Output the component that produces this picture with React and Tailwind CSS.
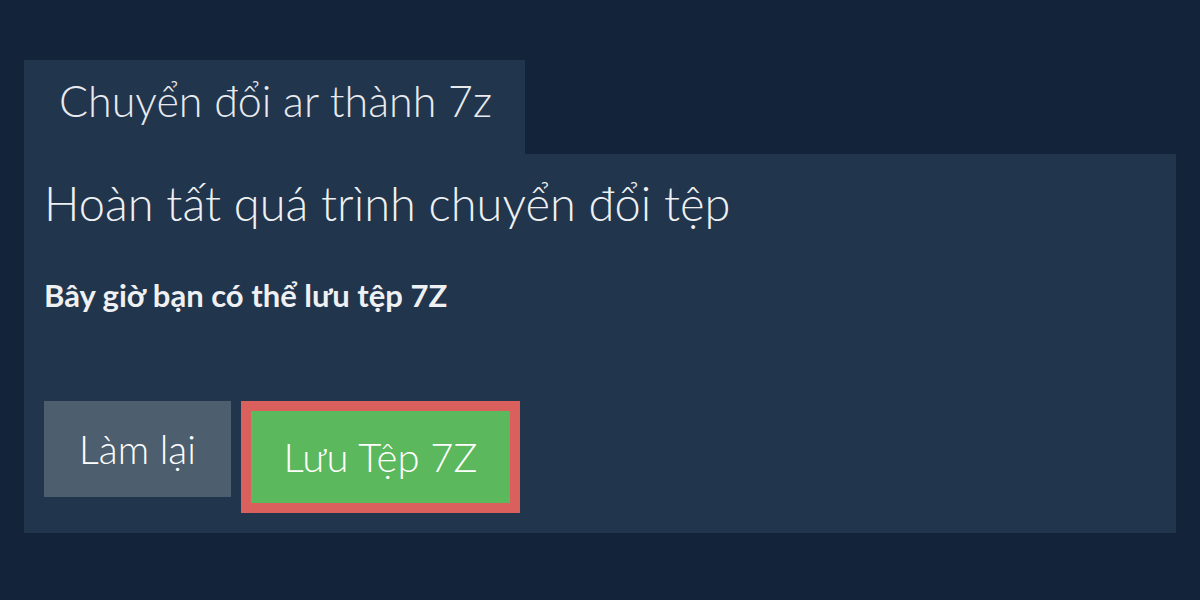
export default function App() {
  return (
    <div className="h-[600px] w-[1200px] bg-[#12233a] px-6 pt-[60px] font-['Lato','Liberation_Sans',sans-serif] text-white">
      <div className="h-[94px] w-[501px] bg-[#21354d] pl-[35px] pt-[19px]">
        <span className="block text-[43px] font-light leading-none text-[#e8eaed]">Chuyển đổi ar thành 7z</span>
      </div>
      <div className="h-[379px] bg-[#21354d] px-5 pt-[26px]">
        <h1 className="text-[47px] font-light leading-none text-[#eef0f2]">Hoàn tất quá trình chuyển đổi tệp</h1>
        <p className="mt-[53px] text-[31px] font-bold leading-none text-[#eef0f2]">Bây giờ bạn có thể lưu tệp 7Z</p>
        <div className="mt-[90px] flex items-start gap-[10px]">
          <button type="button" className="flex h-[96px] w-[187px] items-center justify-center bg-[#4d5e6f] text-[39px] font-light leading-none text-white">
            Làm lại
          </button>
          <button type="button" className="flex h-[112px] w-[279px] items-center justify-center border-[10px] border-[#d9605c] bg-[#5cb85c] text-[40px] font-light leading-none text-white">
            Lưu Tệp 7Z
          </button>
        </div>
      </div>
    </div>
  );
}
